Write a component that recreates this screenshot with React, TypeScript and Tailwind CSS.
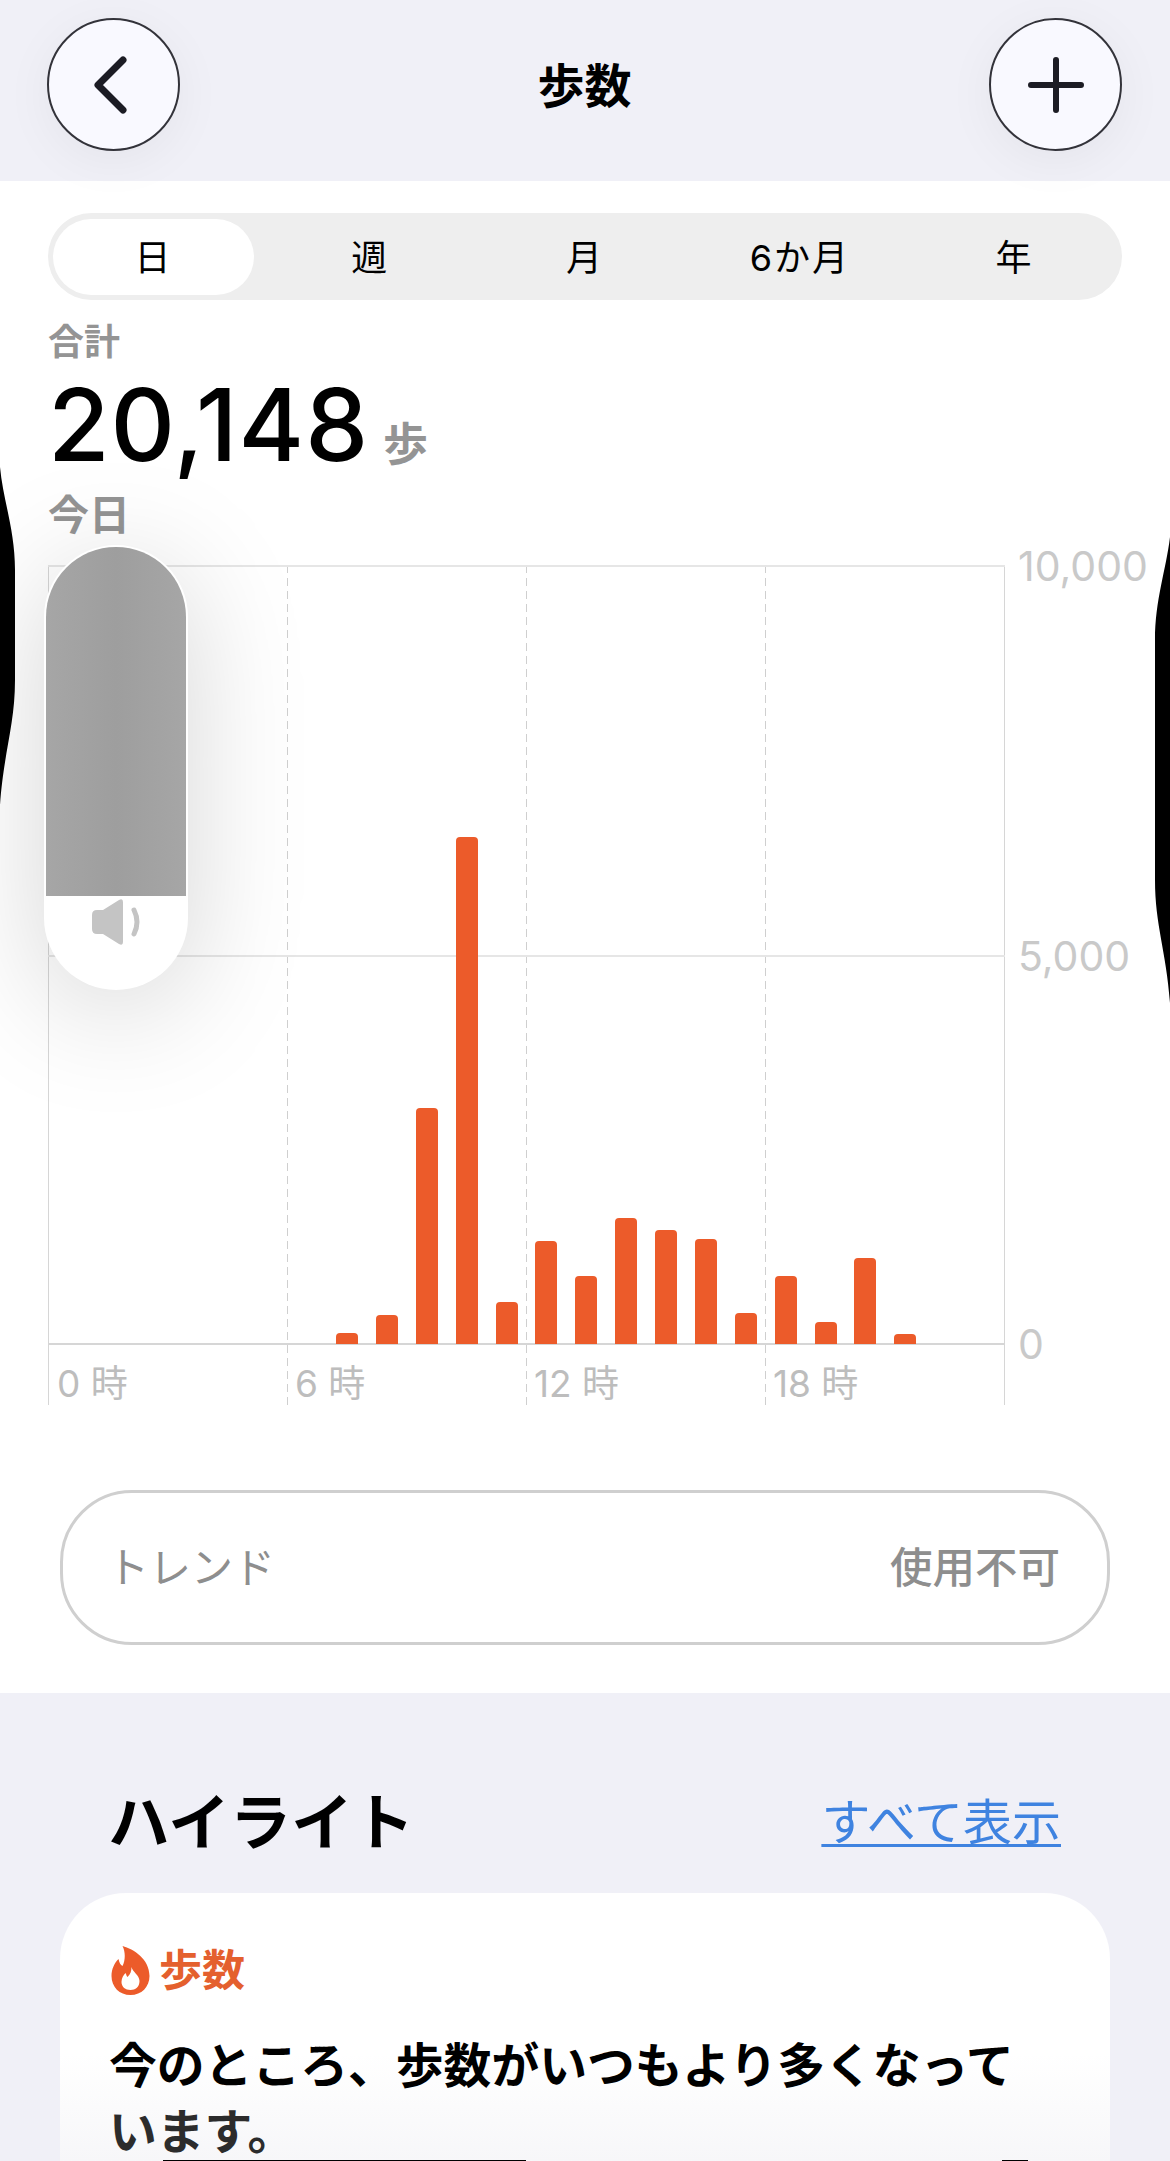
import React from 'react';

const FONT = "font-['Inter','Noto_Sans_CJK_JP',sans-serif]";

// hourly step bars, height in px above the baseline
const BARS: { hour: number; h: number }[] = [
  { hour: 7, h: 11 },
  { hour: 8, h: 29 },
  { hour: 9, h: 236 },
  { hour: 10, h: 507 },
  { hour: 11, h: 42 },
  { hour: 12, h: 103 },
  { hour: 13, h: 68 },
  { hour: 14, h: 126 },
  { hour: 15, h: 114 },
  { hour: 16, h: 105 },
  { hour: 17, h: 31 },
  { hour: 18, h: 68 },
  { hour: 19, h: 22 },
  { hour: 20, h: 86 },
  { hour: 21, h: 10 },
];

const TABS = ['日', '週', '月', '6か月', '年'];
const HOURS = ['0 時', '6 時', '12 時', '18 時'];

const RoundButton: React.FC<{ children: React.ReactNode }> = ({ children }) => (
  <div className="w-[133px] h-[133px] rounded-full bg-[#f9f9ff] border-2 border-[#33333a] flex items-center justify-center shadow-[0_10px_50px_rgba(0,0,0,0.05)]">
    {children}
  </div>
);

const Chart: React.FC = () => (
  <div className="relative mt-[26px] w-[957px] h-[840px]">
    {/* vertical guides + hour labels */}
    <div className="absolute inset-0 grid grid-cols-4 border-r border-[#d6d6d6]">
      {HOURS.map((label, i) => (
        <div
          key={label}
          className={`flex items-end pl-[8px] text-[37px] leading-[42px] text-[#bdbdbd] ${i === 0 ? 'border-l border-[#d6d6d6]' : 'bg-[repeating-linear-gradient(to_bottom,#cfcfcf_0_8px,transparent_8px_13px)] bg-size-[2px_100%] bg-position-[-1px_0] bg-no-repeat'}`}
        >
          {label}
        </div>
      ))}
    </div>

    {/* horizontal guides */}
    <div className="absolute top-0 left-0 right-0 h-[780px] flex flex-col">
      <div className="h-[390px] border-t-2 border-[#e6e6e6]" />
      <div className="h-[390px] border-t-2 border-b-2 border-t-[#e6e6e6] border-b-[#d6d6d6]" />
    </div>

    {/* bars */}
    <div className="absolute top-0 left-0 right-0 h-[779px] grid grid-cols-[repeat(24,1fr)] items-end justify-items-center">
      {BARS.map((b) => (
        <div
          key={b.hour}
          className="w-[22px] bg-[#ec5b2a] rounded-t-[4px]"
          style={{ gridColumnStart: b.hour + 1, height: b.h }}
        />
      ))}
    </div>

    {/* y axis */}
    <span className="absolute left-[970px] top-[-23px] text-[41px] leading-[48px] text-[#c9c9c9]">10,000</span>
    <span className="absolute left-[970px] top-[367px] text-[41px] leading-[48px] text-[#c9c9c9]">5,000</span>
    <span className="absolute left-[970px] top-[755px] text-[41px] leading-[48px] text-[#c9c9c9]">0</span>
  </div>
);

const VolumeHud: React.FC = () => (
  <div className="absolute left-[44px] top-[545px] w-[144px] h-[445px] rounded-[72px] bg-white p-[2px] pb-0 shadow-[0_20px_120px_rgba(0,0,0,0.17)] overflow-hidden">
    <div className="h-[349px] rounded-t-[70px] bg-linear-to-r from-[#a6a6a6] via-[#9e9e9e] to-[#a6a6a6]" />
    <svg className="ml-[46px] mt-[2px]" width="50" height="48" viewBox="0 0 50 48">
      <path
        d="M5 12H11L27 2Q31 0 31 4V44Q31 48 27 46L11 36H5Q0 36 0 31V17Q0 12 5 12Z"
        fill="#c4c4c4"
      />
      <path d="M42 12Q48 24 42 36" fill="none" stroke="#c4c4c4" strokeWidth="5" strokeLinecap="round" />
    </svg>
  </div>
);

// the dark shapes at the edges of the photo
const EdgeShapes: React.FC = () => (
  <>
    <svg className="absolute left-0 top-[460px]" width="20" height="350" viewBox="0 0 20 350">
      <path d="M0 7C3 40 15 70 15 110V220C15 265 4 290 0 345Z" fill="#000" />
    </svg>
    <svg className="absolute right-0 top-[530px]" width="20" height="480" viewBox="0 0 20 480">
      <path d="M20 7C16 40 5 70 5 110V350C5 395 16 420 20 473Z" fill="#000" />
    </svg>
    <svg className="absolute left-0 bottom-0" width="1170" height="2" viewBox="0 0 1170 2">
      <path d="M163 1H526V2H163ZM1002 1H1028V2H1002Z" fill="#000" />
    </svg>
  </>
);

const App: React.FC = () => {
  return (
    <div className={`relative w-[1170px] h-[2161px] overflow-hidden bg-[#f0f0f7] text-black ${FONT}`}>
      {/* Header */}
      <div className="h-[181px] pl-[47px] pt-[18px] pr-[48px] flex items-start justify-between bg-[#f0f0f7]">
        <RoundButton>
          <svg width="50" height="64" viewBox="0 0 50 64">
            <path d="M34 7L9 32L34 57" fill="none" stroke="#1c1c24" strokeWidth="7" strokeLinecap="round" strokeLinejoin="round" />
          </svg>
        </RoundButton>
        <h1 className="text-[47px] leading-[135px] font-bold">歩数</h1>
        <RoundButton>
          <svg width="56" height="56" viewBox="0 0 56 56">
            <path d="M28 3V53M3 28H53" fill="none" stroke="#1c1c24" strokeWidth="6" strokeLinecap="round" />
          </svg>
        </RoundButton>
      </div>

      {/* Main panel */}
      <div className="h-[1512px] bg-white px-[48px] pt-[32px]">
        <div className="h-[87px] rounded-[44px] bg-[#eeeeee] grid grid-cols-5 items-center">
          {TABS.map((t, i) => (
            <div
              key={t}
              className={`h-[76px] flex items-center justify-center pt-[3px] text-[36px] tracking-[2px] rounded-[38px] ${i === 0 ? 'bg-white ml-[5px] mr-[9px]' : ''}`}
            >
              {t}
            </div>
          ))}
        </div>

        <div className="mt-[20px] text-[36px] leading-[44px] font-semibold text-[#949494]">合計</div>
        <div className="mt-[6px] flex items-baseline gap-[14px] leading-[110px]">
          <span className="text-[100px] leading-[110px] font-medium tracking-[1px]">20,148</span>
          <span className="text-[45px] font-semibold text-[#949494]">歩</span>
        </div>
        <div className="mt-[-9px] text-[41px] leading-[48px] font-semibold text-[#949494]">今日</div>

        <Chart />

        <div className="mt-[85px] mx-[12px] h-[155px] rounded-[72px] border-[3px] border-[#cfcfcf] flex items-center justify-between pl-[44px] pr-[47px] text-[#8e8e8e]">
          <span className="text-[42px]">トレンド</span>
          <span className="text-[42.5px] font-medium">使用不可</span>
        </div>
      </div>

      {/* Highlights */}
      <div className="px-[60px]">
        <div className="h-[200px] pl-[48px] pr-[49px] pt-[93px] flex items-start justify-between">
          <h2 className="text-[61.5px] leading-[74px] font-bold">ハイライト</h2>
          <a className="mt-[7px] text-[49px] leading-[60px] text-[#3f83e0] underline underline-offset-[4px] decoration-[3px]">
            すべて表示
          </a>
        </div>
        <div className="h-[268px] rounded-t-[66px] bg-linear-to-b from-white from-60% to-[#f7f7f9] pl-[49px] pr-[50px] pt-[50px]">
          <div className="ml-[2px] flex items-center gap-[9px] text-[#e4602e]">
            <svg width="39" height="50" viewBox="0 0 38 50">
              <path d="M11 1C22 4 38 14 38 31C38 42 30 50 19 50C8 50 0 42 0 31C0 24 3 18 7 14C8 18 9 20 11 21C14 15 14 7 11 1Z" fill="#ec5b2a" />
              <path d="M20 22C21 27 28 30 28 36C28 42 24 45 19 45C14 45 10 42 10 37C10 33 12 30 14 28C15 30 15 31 16 32C19 29 20 26 20 22Z" fill="#fff" />
            </svg>
            <span className="text-[43px] leading-[54px] font-semibold">歩数</span>
          </div>
          <p className="mt-[35px] text-[47.8px] leading-[68px] font-semibold whitespace-nowrap">
            今のところ、歩数がいつもより多くなって
            <span className="block mt-[4px] leading-[56px] text-[#2c2c2c]">います。</span>
          </p>
        </div>
      </div>

      <VolumeHud />
      <EdgeShapes />
    </div>
  );
};

export default App;
